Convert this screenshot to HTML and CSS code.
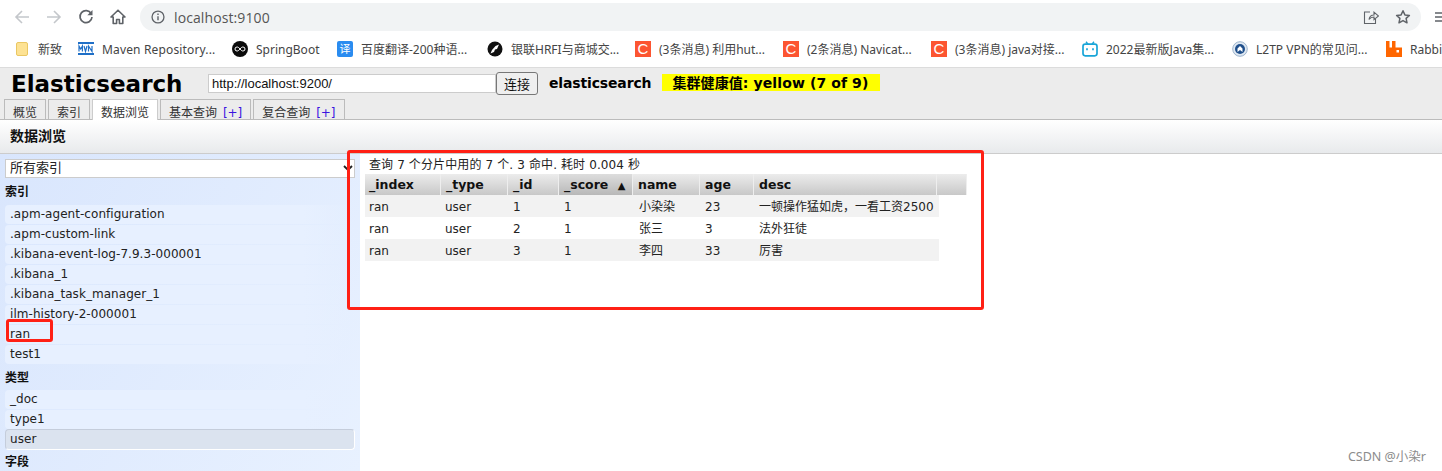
FILE: index.html
```html
<!DOCTYPE html>
<html lang="en">
<head>
    <meta charset="UTF-8">
    <title>Elasticsearch</title>
    <link rel="stylesheet" href="styles.css">
</head>
<body>
    <div class="toolbar">
        <svg class="nav-icon" viewBox="0 0 16 16"><path d="M15 8H2M8 2L2 8l6 6" fill="none" stroke="#c4c7cb" stroke-width="1.6"/></svg>
        <svg class="nav-icon" viewBox="0 0 16 16"><path d="M1 8h13M8 2l6 6-6 6" fill="none" stroke="#c4c7cb" stroke-width="1.6"/></svg>
        <svg class="nav-icon" viewBox="0 0 16 16"><path d="M13.2 4.6A6 6 0 1 0 14 8" fill="none" stroke="#5f6368" stroke-width="1.7"/><path d="M14.5 1v5.2H9.3z" fill="#5f6368"/></svg>
        <svg class="nav-icon" viewBox="0 0 16 16"><path d="M8 1.2L1 8h2.2v6.5h3.4v-4h2.8v4h3.4V8H15z" fill="none" stroke="#5f6368" stroke-width="1.6" stroke-linejoin="round"/></svg>
        <div class="address">
            <svg class="info-icon" viewBox="0 0 16 16"><circle cx="8" cy="8" r="6.8" fill="none" stroke="#5f6368" stroke-width="1.5"/><path d="M8 7v4.600M8 4v1.800" stroke="#5f6368" stroke-width="1.600"/></svg>
            <span class="url">localhost:9100</span>
            <svg class="share-icon" viewBox="0 0 16 16"><path d="M7 3H1.500v11.500h11V10" fill="none" stroke="#5f6368" stroke-width="1.100"/><path d="M6 10.500C6.500 7.500 8.500 6 11 6V3.200L15.500 7 11 10.600V8C9 8 7.200 8.800 6 10.500z" fill="none" stroke="#5f6368" stroke-width="1.100"/></svg>
            <svg class="star-icon" viewBox="0 0 16 16"><path d="M8 1.800l1.900 4.100 4.500.5-3.300 3 .9 4.400L8 11.600l-4 2.200.9-4.400-3.300-3 4.500-.5z" fill="none" stroke="#5f6368" stroke-width="1.500" stroke-linejoin="round"/></svg>
        </div>
        <svg class="reading-list" viewBox="0 0 8 10"><path d="M0 1h8M0 5h8M0 9h8" stroke="#5f6368" stroke-width="1.500"/></svg>
    </div>

    <div class="bookmarks">
        <div class="mark">
            <svg class="fav fav-folder" viewBox="0 0 12 14"><rect x=".5" y=".5" width="11" height="13" rx="1.500" fill="#fde293" stroke="#eac763"/></svg>
            <span class="w-xinzhi">新致</span>
        </div>
        <div class="mark">
            <svg class="fav" viewBox="0 0 16 16"><rect y="1" width="16" height="2" fill="#1f6fc7"/><rect y="12" width="16" height="2" fill="#1f6fc7"/><path d="M1 10.500V5l1.700 3L4.400 5v5.500M6 5l1.500 5.500L9 5M10.500 10.500V5l3.500 5.500V5" fill="none" stroke="#1f6fc7" stroke-width="1.200"/></svg>
            <span class="w-maven">Maven Repository...</span>
        </div>
        <div class="mark">
            <svg class="fav" viewBox="0 0 16 16"><circle cx="8" cy="8" r="8" fill="#0b0b0b"/><path d="M8 8C6.800 6.400 5.900 6 5 6a2 2 0 0 0 0 4c.9 0 1.800-.4 3-2zm0 0c1.200-1.600 2.100-2 3-2a2 2 0 0 1 0 4c-.9 0-1.800-.4-3-2z" fill="none" stroke="#fff" stroke-width="1"/></svg>
            <span class="w-spring">SpringBoot</span>
        </div>
        <div class="mark">
            <div class="fav fav-fanyi">译</div>
            <span class="w-baidu">百度翻译-200种语...</span>
        </div>
        <div class="mark">
            <svg class="fav" viewBox="0 0 16 16"><circle cx="8" cy="8" r="7.500" fill="#111"/><path d="M12 3.500L8.500 5 5 9l-1.500 3.500L7 11l1-2.500 2-.5z" fill="#fff"/></svg>
            <span class="w-union">银联HRFI与商城交...</span>
        </div>
        <div class="mark">
            <div class="fav fav-csdn">C</div>
            <span class="w-hut">(3条消息) 利用hut...</span>
        </div>
        <div class="mark">
            <div class="fav fav-csdn">C</div>
            <span class="w-navicat">(2条消息) Navicat...</span>
        </div>
        <div class="mark">
            <div class="fav fav-csdn">C</div>
            <span class="w-java">(3条消息) java对接...</span>
        </div>
        <div class="mark">
            <svg class="fav" viewBox="0 0 16 16"><path d="M4 .8L6 3.200M12 .8L10 3.200" stroke="#19a5d8" stroke-width="1.400"/><rect x="1" y="3.200" width="14" height="11.600" rx="2.200" fill="none" stroke="#19a5d8" stroke-width="1.700"/><path d="M5 7.200v2M11 7.200v2" stroke="#19a5d8" stroke-width="1.700"/></svg>
            <span class="w-bili">2022最新版Java集...</span>
        </div>
        <div class="mark">
            <svg class="fav" viewBox="0 0 16 16"><circle cx="8" cy="8" r="7.300" fill="#dfe8f2" stroke="#9db4cc"/><circle cx="8" cy="8" r="5" fill="#1f4f8b"/><path d="M5.500 11V7.500L8 5l2.500 2.500V11L8 9z" fill="#fff"/></svg>
            <span class="w-l2tp">L2TP VPN的常见问...</span>
        </div>
        <div class="mark">
            <svg class="fav" viewBox="0 0 16 16"><path d="M0 0h3.500v6.500h2.500V0h3.500v6.500H16V16H0z" fill="#f60"/><rect x="10.500" y="9" width="2.500" height="2.500" fill="#fff"/></svg>
            <span>Rabbi</span>
        </div>
    </div>

    <div class="es-header">
        <div class="es-top">
            <h1 class="es-title">Elasticsearch</h1>
            <input class="es-url" type="text" value="http://localhost:9200/">
            <button class="es-connect">连接</button>
            <span class="es-cluster">elasticsearch</span>
            <span class="es-health">集群健康值: yellow (7 of 9)</span>
        </div>
        <div class="tabs">
            <div class="tab">概览</div>
            <div class="tab">索引</div>
            <div class="tab tab-active">数据浏览</div>
            <div class="tab">基本查询 <span class="plus">[+]</span></div>
            <div class="tab">复合查询 <span class="plus">[+]</span></div>
        </div>
    </div>

    <div class="section-bar">数据浏览</div>

    <div class="browser">
        <div class="sidebar">
            <div class="fake-select">所有索引
                <svg class="select-arrow" viewBox="0 0 10 6"><path d="M1 1l4 4 4-4" fill="none" stroke="#222" stroke-width="1.800"/></svg>
            </div>
            <div class="side-label">索引</div>
            <div class="side-row">.apm-agent-configuration</div>
            <div class="side-row">.apm-custom-link</div>
            <div class="side-row">.kibana-event-log-7.9.3-000001</div>
            <div class="side-row">.kibana_1</div>
            <div class="side-row">.kibana_task_manager_1</div>
            <div class="side-row">ilm-history-2-000001</div>
            <div class="side-row">ran</div>
            <div class="side-row">test1</div>
            <div class="side-label">类型</div>
            <div class="side-row">_doc</div>
            <div class="side-row">type1</div>
            <div class="side-row side-row-active">user</div>
            <div class="side-label side-label-last">字段</div>
        </div>

        <div class="results">
            <div class="summary">查询 7 个分片中用的 7 个. 3 命中. 耗时 0.004 秒</div>
            <div class="grid-head">
                <div class="th">_index</div>
                <div class="th">_type</div>
                <div class="th">_id</div>
                <div class="th th-sorted">_score <span class="sort-arrow">▲</span></div>
                <div class="th">name</div>
                <div class="th">age</div>
                <div class="th">desc</div>
                <div class="th"></div>
            </div>
            <div class="grid-row row-odd">
                <div>ran</div><div>user</div><div>1</div><div>1</div><div>小染染</div><div>23</div><div>一顿操作猛如虎，一看工资2500</div>
            </div>
            <div class="grid-row">
                <div>ran</div><div>user</div><div>2</div><div>1</div><div>张三</div><div>3</div><div>法外狂徒</div>
            </div>
            <div class="grid-row row-odd">
                <div>ran</div><div>user</div><div>3</div><div>1</div><div>李四</div><div>33</div><div>厉害</div>
            </div>
        </div>
    </div>

    <div class="mark-box box-results"></div>
    <div class="mark-box box-ran"></div>
    <div class="watermark">CSDN @小染r</div>
</body>
</html>
```

FILE: styles.css
```css
html, body {
    margin: 0;
    height: 471px;
    overflow: hidden;
}

body {
    position: relative;
    display: flex;
    flex-direction: column;
    background-color: #ffffff;
    color: #111;
    font-family: "DejaVu Sans", "Noto Sans CJK SC", sans-serif;
    font-size: 12px;
}

/* browser chrome */
.toolbar {
    display: flex;
    align-items: center;
    flex: none;
    height: 31px;
    padding: 3px 0 0 14px;
    box-sizing: border-box;
    gap: 16px;
}

.nav-icon {
    width: 16px;
    height: 16px;
    flex: none;
    margin-top: -1px;
}

.address {
    display: flex;
    align-items: center;
    flex: none;
    width: 1281px;
    height: 28px;
    margin-left: -2px;
    padding: 0 10px 0 11px;
    box-sizing: border-box;
    background-color: #f1f3f4;
    border-radius: 14px;
}

.info-icon {
    width: 14px;
    height: 14px;
    flex: none;
}

.url {
    margin-left: 9px;
    font-family: "Open Sans", sans-serif;
    font-size: 14px;
    color: #555;
    letter-spacing: .1px;
    flex: 1;
}

.share-icon {
    width: 16px;
    height: 16px;
    margin-right: 16px;
}

.star-icon {
    width: 16px;
    height: 16px;
}

.reading-list {
    width: 8px;
    height: 10px;
    flex: none;
    margin-left: -2px;
}

.bookmarks {
    display: flex;
    align-items: center;
    flex: none;
    height: 36px;
    padding-left: 16px;
    gap: 16px;
    font-family: "Noto Sans", "Noto Sans CJK SC", sans-serif;
    font-size: 12px;
    color: #444;
    white-space: nowrap;
    overflow: hidden;
}

.mark {
    display: flex;
    align-items: center;
    gap: 8px;
    flex: none;
}

.fav {
    width: 16px;
    height: 16px;
    flex: none;
}

.fav-folder {
    width: 12px;
    height: 14px;
    margin-right: 2px;
}

.fav-fanyi {
    background-color: #2a8cf0;
    color: #fff;
    border-radius: 2px;
    font-size: 11px;
    line-height: 16px;
    text-align: center;
}

.fav-csdn {
    background-color: #fc5531;
    color: #fff;
    font-family: "Liberation Sans", sans-serif;
    font-size: 15px;
    line-height: 16px;
    text-align: center;
}

/* label widths of the bookmark strip */
.w-xinzhi { width: 24px; }
.w-maven { width: 114px; letter-spacing: .15px; }
.w-spring { width: 65px; }
.w-baidu { width: 110px; }
.w-union { width: 108px; }
.w-hut { width: 108px; }
.w-navicat { width: 108px; }
.w-java { width: 111px; }
.w-bili { width: 110px; }
.w-l2tp { width: 114px; }

/* head app header */
.es-header {
    flex: none;
    height: 53px;
    box-sizing: border-box;
    background-color: #ececec;
    border-top: 1px solid #dcdcdc;
    border-bottom: 1px solid #bbb;
}

.es-top {
    display: flex;
    align-items: center;
    height: 31px;
    padding-left: 11px;
}

.es-title {
    margin: 0;
    width: 197px;
    font-size: 23px;
    line-height: 30px;
    font-weight: bold;
    color: #000;
}

.es-url {
    width: 288px;
    height: 19px;
    box-sizing: border-box;
    margin: 0;
    padding: 0 3px;
    border: 1px solid #ccc;
    background-color: #fff;
    font-family: "Liberation Sans", sans-serif;
    font-size: 13px;
    color: #111;
}

.es-connect {
    width: 42px;
    height: 23px;
    box-sizing: border-box;
    margin: 0;
    padding: 0;
    border: 1px solid #777;
    border-radius: 3px;
    background-color: #efefef;
    font-family: "Noto Sans CJK SC", sans-serif;
    font-size: 13px;
    color: #111;
}

.es-cluster {
    margin: -2px 0 0 11px;
    font-size: 14px;
    font-weight: bold;
    letter-spacing: -.15px;
    color: #000;
}

.es-health {
    margin: -2px 0 0 11px;
    padding: 1px 12px 0 10px;
    background-color: #ffff00;
    font-size: 14px;
    line-height: 16px;
    font-weight: bold;
    letter-spacing: .1px;
    color: #000;
}

.tabs {
    display: flex;
    gap: 2px;
    padding-left: 4px;
    height: 20px;
}

.tab {
    height: 20px;
    box-sizing: border-box;
    padding: 0 8px;
    border: 1px solid #bbb;
    border-bottom: none;
    background-color: #ececec;
    font-size: 12px;
    line-height: 26px;
    color: #333;
    white-space: nowrap;
    overflow: hidden;
}

.tab-active {
    position: relative;
    height: 21px;
    background-color: #fff;
    border-color: #ccc;
}

.plus {
    color: #3a14e0;
    margin-left: 2px;
}

.section-bar {
    flex: none;
    height: 34px;
    box-sizing: border-box;
    padding-left: 10px;
    background: linear-gradient(#ffffff, #e8eaec);
    border-bottom: 1px solid #ccc;
    font-size: 14px;
    line-height: 33px;
    font-weight: bold;
    color: #111;
}

/* data browser */
.browser {
    display: flex;
    flex: 1;
    min-height: 0;
}

.sidebar {
    width: 360px;
    flex: none;
    box-sizing: border-box;
    padding: 5px 5px 0;
    background: linear-gradient(120deg, #d9e6fd, #e8f1ff);
    overflow: hidden;
}

.fake-select {
    position: relative;
    width: 350px;
    height: 19px;
    box-sizing: border-box;
    padding-left: 4px;
    border: 1px solid #ccc;
    background-color: #fff;
    font-size: 13px;
    line-height: 16px;
    color: #222;
}

.select-arrow {
    position: absolute;
    right: 1px;
    top: 5px;
    width: 10px;
    height: 6px;
}

.side-label {
    height: 25px;
    font-size: 12px;
    line-height: 27px;
    font-weight: bold;
    color: #111;
}

.side-label:nth-child(2) {
    height: 27px;
    line-height: 28px;
}

.side-label-last {
    line-height: 25px;
}

.side-row {
    height: 19px;
    margin-bottom: 1px;
    padding-left: 5px;
    width: 345px;
    border-radius: 4px;
    background: linear-gradient(90deg, #e7f0ff 85%, rgba(231, 240, 255, 0));
    line-height: 19px;
    font-size: 12px;
    letter-spacing: .05px;
    color: #222;
}

.side-row-active {
    width: 344px;
    background: #dbe3ef;
    border: 1px solid #fff;
    border-top-color: #c5cddb;
    border-left-color: #c5cddb;
    margin-top: -1px;
    margin-bottom: 0;
    padding-left: 4px;
}

.results {
    flex: 1;
    padding: 3px 0 0 5px;
}

.summary {
    padding-left: 4px;
    height: 17px;
    line-height: 17px;
    font-size: 12px;
    letter-spacing: .12px;
    color: #222;
}

.grid-head, .grid-row {
    display: grid;
    align-items: center;
}

.grid-head {
    height: 21px;
    grid-template-columns: 76px 67px 51px 74px 67px 54px 183px 30px;
}

.th {
    height: 21px;
    box-sizing: border-box;
    padding-left: 5px;
    border-right: 1px solid #eee;
    background: linear-gradient(#ececec, #c8c8c8);
    font-size: 12.500px;
    line-height: 21px;
    font-weight: bold;
    color: #111;
    white-space: nowrap;
}

.th:first-child {
    padding-left: 4px;
}

.th-sorted {
    background: linear-gradient(#dddddd, #b8b8b8);
}

.sort-arrow {
    margin-left: 5px;
    font-size: 10px;
}

.grid-row {
    height: 22px;
    width: 574px;
    grid-template-columns: 76px 67px 51px 75px 66px 54px 185px;
    font-size: 12px;
    color: #222;
}

.grid-row > div {
    padding: 2px 0 0 5px;
    line-height: 20px;
    white-space: nowrap;
}

.grid-row > div:nth-child(-n+2) {
    padding-left: 4px;
}

.row-odd {
    background-color: #f2f2f2;
}

/* red annotation boxes and watermark lie over the page */
.mark-box {
    position: absolute;
    box-sizing: border-box;
    border: 3px solid #ff2015;
    border-radius: 3px;
}

.box-results {
    left: 347px;
    top: 150px;
    width: 637px;
    height: 160px;
}

.box-ran {
    left: 6px;
    top: 319px;
    width: 47px;
    height: 23px;
}

.watermark {
    position: absolute;
    right: 16px;
    top: 446px;
    font-family: "Noto Sans", "Noto Sans CJK SC", sans-serif;
    font-size: 12.500px;
    color: #8c8c8c;
}
```
